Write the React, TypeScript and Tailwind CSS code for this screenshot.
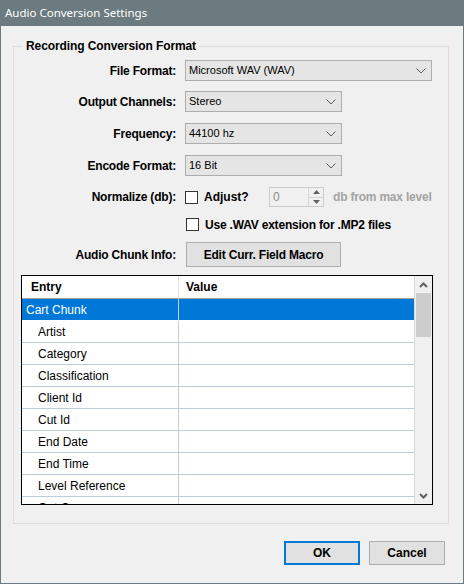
import React from "react";

const rows = [
  "Artist",
  "Category",
  "Classification",
  "Client Id",
  "Cut Id",
  "End Date",
  "End Time",
  "Level Reference",
  "Out Cue",
];

function Chevron({ className = "" }: { className?: string }) {
  return (
    <svg width="10" height="6" viewBox="0 0 10 6" className={className}>
      <polyline points="0.5,0.5 5,5 9.5,0.5" fill="none" stroke="#5a5a5a" strokeWidth="1" />
    </svg>
  );
}

function Dropdown({ value, width }: { value: string; width: string }) {
  return (
    <div
      className={`${width} flex h-[21px] items-center justify-between border border-[#adadad] bg-[#e5e5e5] pl-[3px] pr-[5px] text-[11px] text-black`}
    >
      <span>{value}</span>
      <Chevron />
    </div>
  );
}

function Checkbox() {
  return <div className="h-[13px] w-[13px] border border-[#333333] bg-white" />;
}

function Row({
  label,
  children,
  className = "",
}: {
  label: string;
  children: React.ReactNode;
  className?: string;
}) {
  return (
    <div className={`flex items-center ${className}`}>
      <div className="w-[162px] text-right text-[12px] font-bold tracking-[-0.2px] text-black">{label}</div>
      <div className="ml-[9px] flex items-center">{children}</div>
    </div>
  );
}

export default function App() {
  return (
    <div className="flex h-[584px] w-[464px] flex-col bg-[#6b7b80] px-px pb-px font-['Liberation_Sans',Arial,sans-serif]">
      <div className="flex h-[26px] shrink-0 items-center pl-[4px] font-['Noto_Sans',sans-serif] text-[11.5px] text-white">
        Audio Conversion Settings
      </div>
      <div className="flex flex-1 flex-col bg-[#f0f0f0]">
        <fieldset className="ml-[12px] mt-[12px] w-[436px] border border-[#dcdcdc] p-0 pb-[18px]">
          <legend className="ml-[9px] px-[3px] text-[12px] font-bold leading-[16px] tracking-[-0.1px] text-black">
            Recording Conversion Format
          </legend>

          <Row label="File Format:" className="mt-[6px]">
            <Dropdown value="Microsoft WAV (WAV)" width="w-[247px]" />
          </Row>
          <Row label="Output Channels:" className="mt-[10px]">
            <Dropdown value="Stereo" width="w-[157px]" />
          </Row>
          <Row label="Frequency:" className="mt-[11px]">
            <Dropdown value="44100 hz" width="w-[157px]" />
          </Row>
          <Row label="Encode Format:" className="mt-[11px]">
            <Dropdown value="16 Bit" width="w-[157px]" />
          </Row>

          <Row label="Normalize (db):" className="mt-[11px] h-[20px]">
            <Checkbox />
            <span className="ml-[6px] w-[65px] text-[12px] font-bold text-black">Adjust?</span>
            <div className="flex h-[20px] w-[55px] items-stretch border border-[#cccccc] bg-[#f0f0f0]">
              <span className="flex-1 pl-[3px] text-[12px] leading-[18px] text-[#8a8a8a]">0</span>
              <div className="flex w-[15px] flex-col border-l border-[#d6d6d6]">
                <div className="flex flex-1 items-center justify-center border-b border-[#d6d6d6]">
                  <svg width="7" height="4" viewBox="0 0 7 4">
                    <polygon points="0,4 3.5,0 7,4" fill="#606060" />
                  </svg>
                </div>
                <div className="flex flex-1 items-center justify-center">
                  <svg width="7" height="4" viewBox="0 0 7 4">
                    <polygon points="0,0 3.5,4 7,0" fill="#606060" />
                  </svg>
                </div>
              </div>
            </div>
            <span className="ml-[9px] text-[12px] font-bold tracking-[-0.2px] text-[#a3a3a3]">db from max level</span>
          </Row>

          <div className="ml-[172px] mt-[11px] flex h-[13px] items-center">
            <Checkbox />
            <span className="ml-[6px] text-[12px] font-bold tracking-[-0.2px] text-black">
              Use .WAV extension for .MP2 files
            </span>
          </div>

          <Row label="Audio Chunk Info:" className="mt-[11px]">
            <button className="ml-px flex h-[25px] w-[155px] items-center justify-center border border-[#adadad] bg-[#e1e1e1] text-[12px] font-bold tracking-[-0.2px] text-black">
              Edit Curr. Field Macro
            </button>
          </Row>

          <div className="ml-[7px] mt-[8px] flex h-[230px] w-[412px] border border-black bg-white">
            <div className="flex flex-1 flex-col overflow-hidden border-r border-[#d9d9d9]">
              <div className="flex h-[23px] shrink-0 border-b border-[#a0a0a0] text-[12px] font-bold text-black">
                <div className="flex w-[157px] items-center border-r border-[#e3e3e3] pl-[9px]">Entry</div>
                <div className="flex flex-1 items-center pl-[7px]">Value</div>
              </div>
              <div className="flex h-[22px] shrink-0 border-b border-white bg-[#0078d7] text-[12px] text-white">
                <div className="flex w-[157px] items-center border-r border-[#c6d3df] pl-[4px]">Cart Chunk</div>
                <div className="flex-1" />
              </div>
              {rows.map((r) => (
                <div
                  key={r}
                  className="flex h-[22px] shrink-0 border-b border-[#bfcddb] text-[12px] text-black"
                >
                  <div className="flex w-[157px] items-center border-r border-[#bfcddb] pl-[16px]">{r}</div>
                  <div className="flex-1" />
                </div>
              ))}
            </div>
            <div className="flex w-[17px] shrink-0 flex-col bg-[#f0f0f0]">
              <div className="flex h-[17px] items-center justify-center">
                <svg width="9" height="6" viewBox="0 0 9 6">
                  <polyline points="1,5 4.5,1.5 8,5" fill="none" stroke="#606060" strokeWidth="2" />
                </svg>
              </div>
              <div className="mx-px h-[44px] bg-[#cdcdcd]" />
              <div className="flex-1" />
              <div className="flex h-[17px] items-center justify-center">
                <svg width="9" height="6" viewBox="0 0 9 6">
                  <polyline points="1,1 4.5,4.5 8,1" fill="none" stroke="#606060" strokeWidth="2" />
                </svg>
              </div>
            </div>
          </div>
        </fieldset>

        <div className="mt-[17px] flex justify-end gap-[9px] pr-[18px]">
          <button className="h-[24px] w-[76px] border-2 border-[#0078d7] bg-[#e1e1e1] text-[12px] font-bold text-black">
            OK
          </button>
          <button className="h-[24px] w-[76px] border border-[#adadad] bg-[#e1e1e1] text-[12px] font-bold text-black">
            Cancel
          </button>
        </div>
      </div>
    </div>
  );
}
